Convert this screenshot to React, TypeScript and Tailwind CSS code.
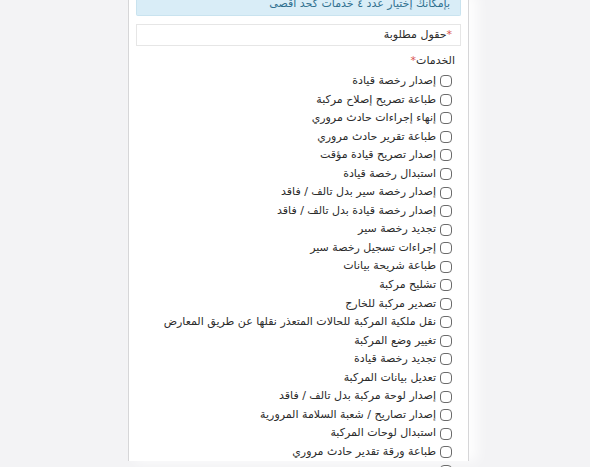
const services = [
  "إصدار رخصة قيادة",
  "طباعة تصريح إصلاح مركبة",
  "إنهاء إجراءات حادث مروري",
  "طباعة تقرير حادث مروري",
  "إصدار تصريح قيادة مؤقت",
  "استبدال رخصة قيادة",
  "إصدار رخصة سير بدل تالف / فاقد",
  "إصدار رخصة قيادة بدل تالف / فاقد",
  "تجديد رخصة سير",
  "إجراءات تسجيل رخصة سير",
  "طباعة شريحة بيانات",
  "تشليح مركبة",
  "تصدير مركبة للخارج",
  "نقل ملكية المركبة للحالات المتعذر نقلها عن طريق المعارض",
  "تغيير وضع المركبة",
  "تجديد رخصة قيادة",
  "تعديل بيانات المركبة",
  "إصدار لوحة مركبة بدل تالف / فاقد",
  "إصدار تصاريح / شعبة السلامة المرورية",
  "استبدال لوحات المركبة",
  "طباعة ورقة تقدير حادث مروري",
  "تجديد تصريح",
];

export default function App() {
  return (
    <div className="h-[467px] w-[590px] overflow-hidden bg-[#f3f3f5]" style={{ fontFamily: '"DejaVu Sans", sans-serif' }}>
      <div className="ml-[128px] h-full w-[341px] border-x border-[#d6d6d8] bg-white px-[7px] shadow-[8px_0_12px_rgba(255,255,255,0.9)]" dir="rtl">
        {/* notice, cut off by the top edge */}
        <div className="-mt-[6px] flex h-[22px] items-center overflow-hidden rounded-b-[2px] border border-t-0 border-[#c9e3ef] bg-[#d9edf7] px-[10px] text-[11px] leading-none text-[#31708f]">
          <span className="-mt-[2px]">بإمكانك إختيار عدد ٤ خدمات كحد أقصى</span>
        </div>

        <div className="mt-[8px] flex h-[22px] items-center border border-[#e6e6e6] px-[8px] text-[11px] text-[#2b2b2b]">
          <span className="text-[#d9534f]">*</span>حقول مطلوبة
        </div>

        <div className="mt-[8px] flex h-[14px] items-center pr-[6px] text-[11px] text-[#2b2b2b]">
          الخدمات<span className="text-[#d9534f]">*</span>
        </div>

        <div className="mt-[4px] flex flex-col pr-[9px]">
          {services.map((s) => (
            <label key={s} className="flex h-[18.55px] shrink-0 items-center gap-[4px] whitespace-nowrap text-[11px] text-[#2b2b2b]">
              <span className="h-[12px] w-[12px] shrink-0 rounded-[4px] border border-[#6b6b6b] bg-white"></span>
              {s}
            </label>
          ))}
        </div>
      </div>
    </div>
  );
}
